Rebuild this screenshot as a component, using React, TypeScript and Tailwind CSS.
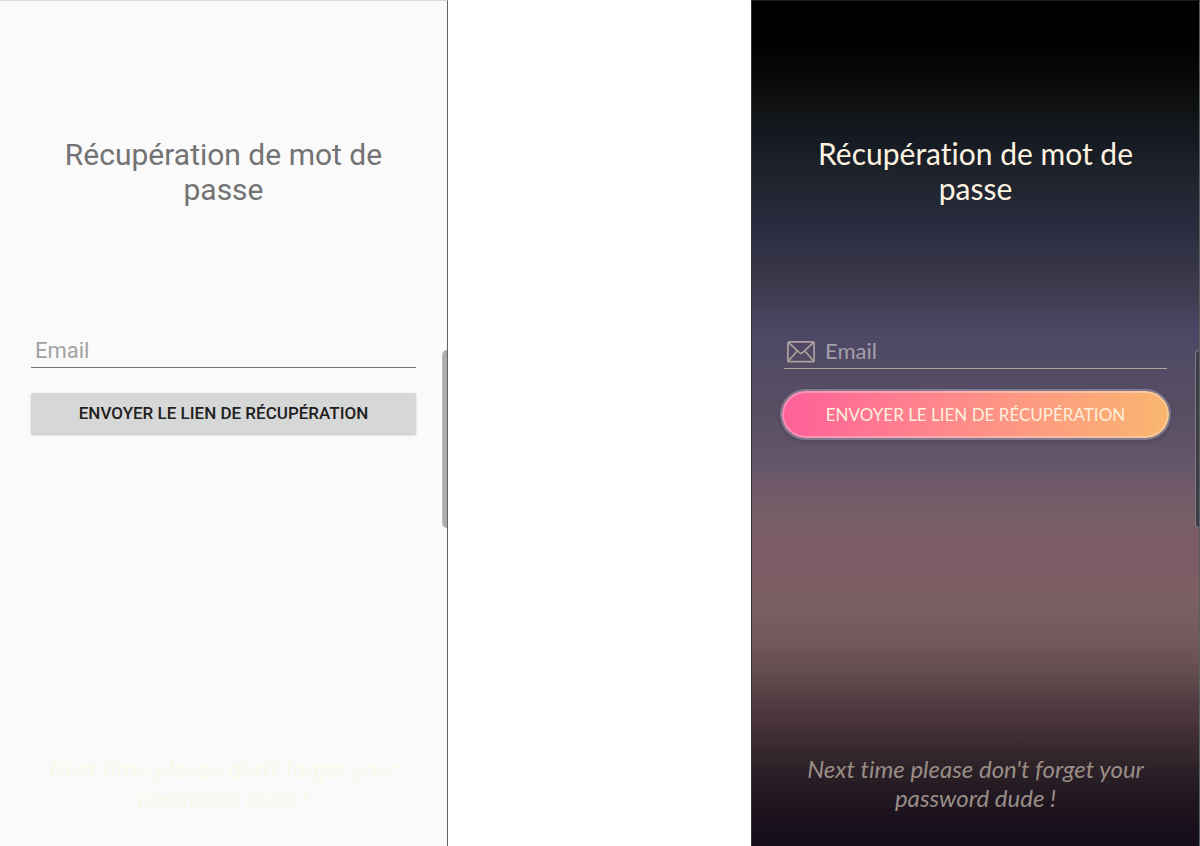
import React from "react";

function EnvelopeIcon() {
  return (
    <svg
      viewBox="0 0 28 22"
      className="h-[22px] w-7 shrink-0"
      fill="none"
      stroke="#aca09c"
      strokeWidth="1.7"
      strokeLinejoin="round"
      strokeLinecap="round"
      aria-hidden="true"
    >
      <rect x="0.9" y="0.9" width="26.2" height="19.8" rx="1.8" />
      <path d="M1.6 1.6 L11.6 10.9 L14 12.6 L16.4 10.9 L26.4 1.6" />
      <path d="M1.6 19.8 L10.2 10 M26.4 19.8 L17.8 10" />
    </svg>
  );
}

function PlainScreen() {
  return (
    <section className="relative flex flex-col border-t border-r border-t-[#d8d8d8] border-r-[#626262] bg-[#fafafa] px-[31px] pt-[136px] pb-8 font-['Roboto',sans-serif]">
      <h1 className="px-6 text-center text-[30px] leading-[35px] text-[#737373]">
        Récupération de mot de passe
      </h1>
      <form className="mt-[127px] flex flex-col" onSubmit={(e) => e.preventDefault()}>
        <input
          type="email"
          aria-label="Email"
          placeholder="Email"
          className="h-[34px] w-full border-b border-[#757575] bg-transparent px-1 text-[22px] leading-7 text-[#737373] outline-none placeholder:text-[#a2a2a2]"
        />
        <button
          type="submit"
          className="mt-[25px] h-[41px] rounded-xs bg-[#d6d7d7] text-[17px] font-medium text-[#1f2020] shadow-[0_1px_2px_rgba(0,0,0,0.25)]"
        >
          ENVOYER LE LIEN DE RÉCUPÉRATION
        </button>
      </form>
      <p className="mt-auto text-center text-2xl leading-[29px] text-[#fbf8ec] italic">
        Next time please don't forget your password dude !
      </p>
      <div className="absolute top-[349px] right-0 h-[178px] w-[5px] rounded-l-[5px] border-l border-[#bdbdbd] bg-[#acacac]" />
    </section>
  );
}

function SunsetScreen() {
  return (
    <section className="relative flex flex-col border-x border-t border-t-[#1c1c1c] border-r-[#55605f] border-l-[#2a3336] bg-[linear-gradient(to_bottom,#000000_0%,#000000_5%,#111214_13%,#13181f_15%,#1f242d_21%,#292d40_27%,#393649_32%,#413e53_35.5%,#4a4665_38.5%,#524b64_43%,#5a5064_50%,#65566a_55%,#70596a_57.5%,#735f66_60.5%,#7b5c66_63%,#7b5c65_67%,#7c5f62_71%,#76595c_75%,#6b5153_78%,#5c494b_80.5%,#503a40_83.5%,#402e34_87%,#2c2128_91%,#1e151f_95%,#160c1b_100%)] px-8 pt-[135px] pb-[34px] font-['Lato',sans-serif] [font-variant-ligatures:none]">
      <h1 className="px-6 text-center text-[30px] leading-[35px] text-[#fdf3e0]">
        Récupération de mot de passe
      </h1>
      <form className="mt-[129px] flex flex-col" onSubmit={(e) => e.preventDefault()}>
        <div className="flex h-[34px] items-center gap-2.5 border-b border-[#b0a6a0] px-[3px]">
          <EnvelopeIcon />
          <input
            type="email"
            aria-label="Email"
            placeholder="Email"
            className="min-w-0 flex-1 bg-transparent pb-0.5 text-[22px] leading-7 text-[#fdf3e0] outline-none placeholder:text-[#a49fad]"
          />
        </div>
        <button
          type="submit"
          className="-mx-0.5 mt-[22px] h-[47px] rounded-full border-2 border-white/30 bg-linear-to-r from-[#ff5f99] to-[#f9b66e] bg-origin-border text-[17px] text-[#fdf0dc] shadow-[0_0_0_2px_#827a90,0_2px_4px_2px_rgba(0,0,0,0.15)]"
        >
          ENVOYER LE LIEN DE RÉCUPÉRATION
        </button>
      </form>
      <p className="mt-auto text-center text-2xl leading-[29px] text-[#998d86] italic">
        Next time please don't forget your password dude !
      </p>
      <div className="absolute top-[349px] right-0 h-[178px] w-1 rounded-l-[5px] border border-r-0 border-[#7e7b80] bg-[#403b48]" />
    </section>
  );
}

export default function App() {
  return (
    <main className="grid min-h-screen grid-cols-[448fr_303fr_449fr] bg-white">
      <PlainScreen />
      <div />
      <SunsetScreen />
    </main>
  );
}
